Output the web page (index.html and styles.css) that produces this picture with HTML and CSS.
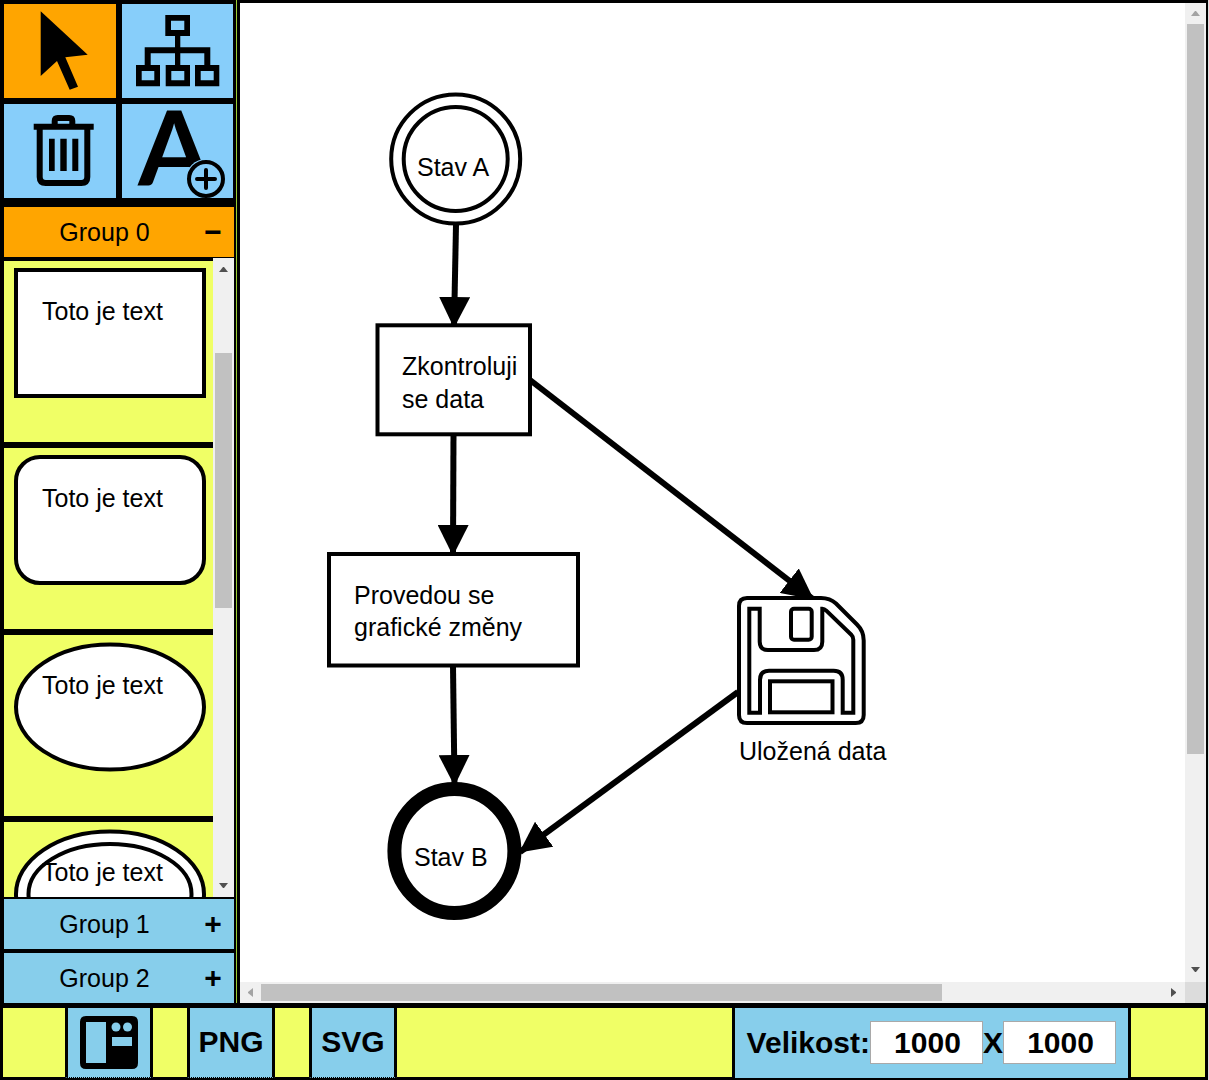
FILE: index.html
```html
<!DOCTYPE html>
<html lang="cs">
<head>
<meta charset="utf-8">
<title>Diagram</title>
<link rel="stylesheet" href="styles.css">
</head>
<body>
<main class="workspace">
  <aside class="sidebar">
    <div class="tools">
      <button class="tool tool-active" type="button" aria-label="Select">
        <svg viewBox="4 4 112 94" width="112" height="94"><path d="M40.700 11.300 87.700 54.700 65.300 57.300 78 86.700 69.700 89.700 57 61 40.700 76z"/></svg>
      </button>
      <button class="tool" type="button" aria-label="Connect">
        <svg viewBox="122 4 111 94" width="111" height="94">
          <path fill-rule="evenodd" d="M165.300 15h24.700v21h-24.700zM171 20.700v9.300h13.300v-9.300zM136 65h24v21.300h-24zM141.700 71v9.300h12.600v-9.300zM165.700 65h24.300v21.300h-24.300zM171.300 71v9.300h13v-9.300zM195 65h24.300v21.300h-24.300zM200.700 71v9.300h13v-9.300z"/>
          <path d="M175 35h5.300v12.300h30v18h-6v-12h-24v12H175v-12h-24.300v12h-6v-18H175z"/>
        </svg>
      </button>
      <button class="tool" type="button" aria-label="Delete">
        <svg viewBox="4 104 112 94" width="112" height="94">
          <path d="M33.700 123.700h60v6h-60zM49 138.700h5.700V171H49zM60.300 138.700h6.400V171h-6.400zM72.300 138.700h6V171h-6z"/>
          <path class="line-6" d="M39.700 127v50q0 6 6 6h35.600q6 0 6-6v-50"/>
          <path class="line-6" d="M54.700 125v-4q0-3 3-3h11.600q3 0 3 3v4"/>
        </svg>
      </button>
      <button class="tool" type="button" aria-label="Add text">
        <svg class="tool-text" viewBox="122 104 111 94" width="111" height="94">
          <text class="tool-letter" x="138" y="185">A</text>
          <circle class="tool-gap" cx="206" cy="179" r="20"/>
          <circle class="line-4" cx="206" cy="179" r="17"/>
          <path class="line-4" stroke-linecap="round" d="M197 179h18M206 170v18"/>
        </svg>
      </button>
    </div>

    <section class="groups">
      <button class="group group-open" type="button" aria-expanded="true"><span class="group-name">Group 0</span><span class="group-sign">−</span></button>
      <div class="panel">
        <div class="shapes">
          <svg class="shape" viewBox="0 0 209 181"><rect class="outline" x="12" y="9" width="188" height="126"/><text x="38" y="59">Toto je text</text></svg>
          <svg class="shape" viewBox="0 0 209 181"><rect class="outline" x="12" y="9" width="188" height="126" rx="24"/><text x="38" y="59">Toto je text</text></svg>
          <svg class="shape" viewBox="0 0 209 181"><ellipse class="outline" cx="106" cy="72" rx="94" ry="62.500"/><text x="38" y="59">Toto je text</text></svg>
          <svg class="shape" viewBox="0 0 209 181"><ellipse class="outline" cx="106" cy="72" rx="94" ry="62.500"/><ellipse class="outline" cx="106" cy="72" rx="81.500" ry="50"/><text x="38" y="59">Toto je text</text></svg>
        </div>
        <div class="scroll scroll-y scroll-shapes" aria-hidden="true">
          <svg class="arrow" viewBox="0 0 21 21"><path d="M6 14h9l-4-5h-1z"/></svg>
          <i class="thumb"></i>
          <svg class="arrow arrow-end" viewBox="0 0 21 21"><path d="M6 7h9l-4 5h-1z"/></svg>
        </div>
      </div>
      <button class="group" type="button" aria-expanded="false"><span class="group-name">Group 1</span><span class="group-sign">+</span></button>
      <button class="group" type="button" aria-expanded="false"><span class="group-name">Group 2</span><span class="group-sign">+</span></button>
    </section>
  </aside>

  <section class="board">
    <svg class="diagram">
      <defs>
        <marker id="tip" markerUnits="userSpaceOnUse" markerWidth="31" markerHeight="31" refX="30" refY="15.500" orient="auto"><path d="M0 0 31 15.500 0 31z"/></marker>
      </defs>
      <g class="edges">
        <path d="M216 222 214 324"/>
        <path d="M213.500 431 213 552"/>
        <path d="M213 663 214.500 782"/>
        <path d="M290 377 573 596"/>
        <path d="M498 689 280 849"/>
      </g>
      <circle class="outline" cx="215.700" cy="156" r="64.500"/>
      <circle class="outline" cx="215.700" cy="156" r="52"/>
      <text x="177" y="173">Stav A</text>
      <rect class="outline" x="137.500" y="322.300" width="152.500" height="109"/>
      <text><tspan x="162" y="372">Zkontroluji</tspan><tspan x="162" y="405">se data</tspan></text>
      <rect class="outline" x="89" y="551" width="249" height="111.500"/>
      <text><tspan x="114" y="601">Provedou se</tspan><tspan x="114" y="633">grafické změny</tspan></text>
      <ellipse class="outline outline-end" cx="214.400" cy="848" rx="60" ry="62"/>
      <text x="174" y="863">Stav B</text>
      <g class="disk">
        <path d="M507 595h74q9 0 15 5.500l21 21q6.700 6.500 6.700 16v74.500q0 8-8 8H507q-8 0-8-8v-109q0-8 8-8z"/>
        <path d="M509.300 605.700h10.400v33q0 8.300 8.300 8.300h46q8.300 0 8.300-8.300v-33q2 0 4 2l25 24q2 2 2 5v73h-10.600v-33q0-9-9-9H529q-9 0-9 9v33h-10.700z"/>
        <rect x="551" y="605.700" width="20.700" height="31" rx="3"/>
        <rect x="530" y="678.300" width="62.500" height="31"/>
      </g>
      <text x="499" y="757">Uložená data</text>
    </svg>
    <div class="scroll scroll-y scroll-board-y" aria-hidden="true">
      <svg class="arrow arrow-off" viewBox="0 0 21 21"><path d="M6 13h9l-4-5h-1z"/></svg>
      <i class="thumb"></i>
      <svg class="arrow arrow-end" viewBox="0 0 21 21"><path d="M6 6h9l-4 5h-1z"/></svg>
    </div>
    <div class="scroll scroll-x" aria-hidden="true">
      <svg class="arrow arrow-off" viewBox="0 0 21 21"><path d="M13 6v9l-5-4v-1z"/></svg>
      <i class="thumb"></i>
      <svg class="arrow arrow-end" viewBox="0 0 21 21"><path d="M7 6v9l5-4v-1z"/></svg>
    </div>
    <div class="corner"></div>
  </section>
</main>

<footer class="toolbar">
  <div class="actions">
    <button class="action" type="button" aria-label="Layout">
      <svg viewBox="0 0 60 54" width="60" height="54"><path fill-rule="evenodd" d="M7 1h46q6 0 6 6v41q0 6-6 6H7q-6 0-6-6V7q0-6 6-6zM7 7v41h20V7zM33 22v9h20v-9z"/><circle class="dot" cx="37" cy="12" r="4.500"/><circle class="dot" cx="48.500" cy="12" r="4.500"/></svg>
    </button>
    <button class="action" type="button">PNG</button>
    <button class="action" type="button">SVG</button>
  </div>
  <div class="size">
    <label for="width">Velikost:</label><input id="width" type="text" value="1000"><label for="height">X</label><input id="height" type="text" value="1000">
  </div>
</footer>
</body>
</html>
```
FILE: styles.css
```css
* { box-sizing: border-box; }

html { background: #ddd; }

body {
  margin: 0 1px 0 0;
  height: 100vh;
  display: grid;
  grid-template-rows: minmax(0, 1fr) auto;
  background: #000;
  color: #000;
  font: 25px/32px "Liberation Sans", Arial, sans-serif;
}

button {
  margin: 0;
  padding: 0;
  border: 0;
  color: inherit;
  font: inherit;
}

svg { display: block; }

.workspace { display: flex; min-height: 0; }

/* Sidebar */
.sidebar {
  display: flex;
  flex-direction: column;
  gap: 9px;
  width: 237px;
  padding: 4px 2px 0 4px;
  border-right: 1px solid #9acd32;
  min-height: 0;
}

.tools {
  display: grid;
  grid-template-columns: 112px 111px;
  gap: 6px;
}

.tool { background: #87cefa; }
.tool-active { background: orange; }
.tool-text { overflow: visible; }
.tool-letter { font: bold 104px Lato, sans-serif; }
.tool-gap { fill: #87cefa; clip-path: inset(0 0 1px); }
.line-4, .line-6 { fill: none; stroke: #000; stroke-width: 4px; }
.line-6 { stroke-width: 6px; }

.groups {
  flex: 1;
  min-height: 0;
  display: flex;
  flex-direction: column;
}

.group {
  display: flex;
  flex: none;
  align-items: center;
  height: 50px;
  padding: 0 12px 0 1px;
  background: skyblue;
}

.group + .group { margin-top: 4px; }
.group-open { background: orange; }
.group-name { flex: 1; }
.group-sign { width: 18px; font-size: 30px; font-weight: bold; }

.panel {
  flex: 1;
  min-height: 0;
  display: grid;
  grid-template-columns: 1fr 21px;
  margin: 1px 0 2px;
}

.shapes {
  display: flex;
  flex-direction: column;
  gap: 6px;
  min-height: 0;
  padding-top: 3px;
  overflow: hidden;
}

.shape { flex: none; width: 100%; height: 181px; background: #f0ff66; }
.outline { fill: #fff; stroke: #000; stroke-width: 4px; }
.outline-end { stroke-width: 14px; }

/* Scrollbars */
.scroll { display: grid; background: #f0f0f0; }
.scroll-y { justify-items: center; }
.scroll-shapes { grid-template-rows: 21px 74fr 255fr 268fr 21px; }
.scroll-board-y { grid-template-rows: 21px 0 730fr 207fr 21px; }
.scroll-x { grid-template-columns: 21px 0 681fr 222fr 21px; align-items: center; }
.thumb { background: #c1c1c1; }
.scroll-y .thumb { grid-row: 3; width: 17px; }
.scroll-x .thumb { grid-column: 3; height: 17px; }
.arrow { width: 21px; height: 21px; fill: #505050; }
.arrow-off { fill: #a3a3a3; }
.scroll-y .arrow-end { grid-row: 5; }
.scroll-x .arrow-end { grid-column: 5; }
.corner { background: #dcdcdc; }

/* Drawing board */
.board {
  flex: 1;
  min-width: 0;
  display: grid;
  grid-template: minmax(0, 1fr) 21px / minmax(0, 1fr) 21px;
  padding: 3px 2px 0 3px;
}

.diagram { width: 100%; height: 100%; background: #fff; }
.edges { fill: none; stroke: #000; stroke-width: 6px; }
.edges path { marker-end: url(#tip); }
#tip path { fill: #000; stroke: none; marker-end: none; }
.disk { fill: #fff; stroke: #000; stroke-width: 4px; }

/* Bottom bar */
.toolbar {
  display: flex;
  justify-content: space-between;
  height: 77px;
  padding: 0 74px 0 62px;
  border: solid #000;
  border-width: 5px 3px 3px;
  background: #f0ff66;
  font-size: 30px;
  font-weight: bold;
}

.actions { display: flex; gap: 34px; }

.action, .size {
  display: flex;
  align-items: center;
  justify-content: center;
  height: 70px;
  border: solid #000;
  border-width: 0 3px;
  background: skyblue;
}

.action {
  width: 88px;
  padding-bottom: 2px;
  border-bottom: 1px dotted skyblue;
  background-clip: padding-box;
}

.dot { fill: skyblue; }

.size { padding: 0 12px 1px; }

.size input {
  width: 113px;
  height: 43px;
  margin: 0;
  padding: 0 0 0 2px;
  border: 1px solid #a9a9a9;
  background: #fff;
  color: inherit;
  font: inherit;
  text-align: center;
}
```
